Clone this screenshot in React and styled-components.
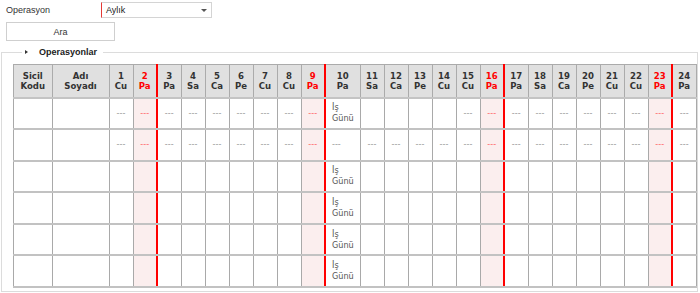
import styled, { createGlobalStyle } from "styled-components";

const GlobalStyle = createGlobalStyle`
  body {
    margin: 0;
    width: 700px;
    overflow: hidden;
    background: #fff;
    font-family: "Liberation Sans", Arial, sans-serif;
    font-size: 9px;
    color: #333;
  }
`;

const Page = styled.div`
  padding-top: 2px;
`;

const FormRow = styled.div`
  display: flex;
  align-items: center;
  height: 16px;
  padding-left: 6px;
`;

const Label = styled.span`
  width: 95px;
`;

const Select = styled.div`
  box-sizing: border-box;
  width: 111px;
  height: 16px;
  display: flex;
  align-items: center;
  justify-content: space-between;
  padding: 0 4px 0 4px;
  border: 1px solid #d4d4d4;
  border-left: 1px solid #e53935;
  color: #222;
`;

const Arrow = styled.span`
  width: 0;
  height: 0;
  border-left: 3px solid transparent;
  border-right: 3px solid transparent;
  border-top: 3px solid #555;
`;

const Button = styled.button`
  box-sizing: border-box;
  display: block;
  width: 109px;
  height: 19px;
  margin: 4px 0 0 6px;
  padding: 0;
  border: 1px solid #cfcfcf;
  background: #fff;
  font-family: inherit;
  font-size: 9px;
  color: #333;
`;

const Fieldset = styled.fieldset`
  margin: 5px 2px 0 1px;
  padding: 6px 11px 3px;
  border: 1px solid #dcdcdc;
  overflow: hidden;
  min-width: 0;
`;

const Legend = styled.legend`
  margin-left: 9px;
  padding: 0 6px 0 3px;
  display: flex;
  align-items: center;
  gap: 11px;
  line-height: 12px;
  font-weight: bold;
  color: #222;
`;

const Caret = styled.span`
  width: 0;
  height: 0;
  border-top: 2.5px solid transparent;
  border-bottom: 2.5px solid transparent;
  border-left: 3px solid #333;
`;

const Table = styled.table`
  table-layout: fixed;
  width: 681.5px;
  border-collapse: collapse;
  font-family: "DejaVu Sans Condensed", "DejaVu Sans", sans-serif;
  font-size: 9px;
`;

const HeadRow = styled.tr`
  height: 33px;
`;

const HeadCell = styled.th`
  padding: 1px 0 0;
  background: #e0e0e0;
  border: 1px solid #ababab;
  border-right: ${(p) => (p.$sunday ? "2px solid #f00" : "1px solid #ababab")};
  border-bottom: 2px solid #c4c4c4;
  color: ${(p) => (p.$sunday ? "#f00" : "#333")};
  font-size: 9.5px;
  font-weight: bold;
  line-height: 10.5px;
  text-align: center;
  vertical-align: middle;
`;

const Row = styled.tr`
  height: 31.6px;
`;

const Cell = styled.td`
  padding: 0 0 0 ${(p) => (p.$left ? "6px" : "0")};
  background: ${(p) => (p.$sunday ? "#fbeeee" : "#fff")};
  border: 1px solid #a9a9a9;
  border-bottom: 2px solid #c2c2c2;
  border-right: ${(p) => (p.$sunday ? "2px solid #f00" : "1px solid #a9a9a9")};
  color: ${(p) => (p.$sunday ? "#f66" : "#9a9a9a")};
  text-align: ${(p) => (p.$left ? "left" : "center")};
  vertical-align: middle;
  line-height: 11px;
`;

const WorkDay = styled.span`
  color: #555;
`;

// the visible part of the month: day 1 is a Saturday ("Cu")
const names = ["Cu", "Pa", "Pa", "Sa", "Ca", "Pe", "Cu"];
const days = Array.from({ length: 24 }, (_, i) => ({
  n: i + 1,
  name: names[i % 7],
  sunday: i % 7 === 1,
}));

// what each day cell holds per row: "dash", "work" or nothing
const rows = [
  (d) => (d === 10 ? "work" : d >= 11 && d <= 14 ? null : "dash"),
  () => "dash",
  (d) => (d === 10 ? "work" : null),
  (d) => (d === 10 ? "work" : null),
  (d) => (d === 10 ? "work" : null),
  (d) => (d === 10 ? "work" : null),
];

const App = () => {
  return (
    <>
      <GlobalStyle />
      <Page>
        <FormRow>
          <Label>Operasyon</Label>
          <Select>
            Aylık
            <Arrow />
          </Select>
        </FormRow>
        <Button>Ara</Button>
        <Fieldset>
          <Legend>
            <Caret />
            Operasyonlar
          </Legend>
          <Table>
            <colgroup>
              <col style={{ width: 38.5 }} />
              <col style={{ width: 57 }} />
              {days.map((d) => (
                <col key={d.n} style={{ width: d.n === 10 ? 35 : 24 }} />
              ))}
            </colgroup>
            <thead>
              <HeadRow>
                <HeadCell>
                  Sicil
                  <br />
                  Kodu
                </HeadCell>
                <HeadCell>
                  Adı
                  <br />
                  Soyadı
                </HeadCell>
                {days.map((d) => (
                  <HeadCell key={d.n} $sunday={d.sunday}>
                    {d.n}
                    <br />
                    {d.name}
                  </HeadCell>
                ))}
              </HeadRow>
            </thead>
            <tbody>
              {rows.map((fill, r) => (
                <Row key={r}>
                  <Cell />
                  <Cell />
                  {days.map((d) => {
                    const v = fill(d.n);
                    return (
                      <Cell key={d.n} $sunday={d.sunday} $left={d.n === 10}>
                        {v === "dash" && "---"}
                        {v === "work" && (
                          <WorkDay>
                            İş
                            <br />
                            Günü
                          </WorkDay>
                        )}
                      </Cell>
                    );
                  })}
                </Row>
              ))}
            </tbody>
          </Table>
        </Fieldset>
      </Page>
    </>
  );
};

export default App;
